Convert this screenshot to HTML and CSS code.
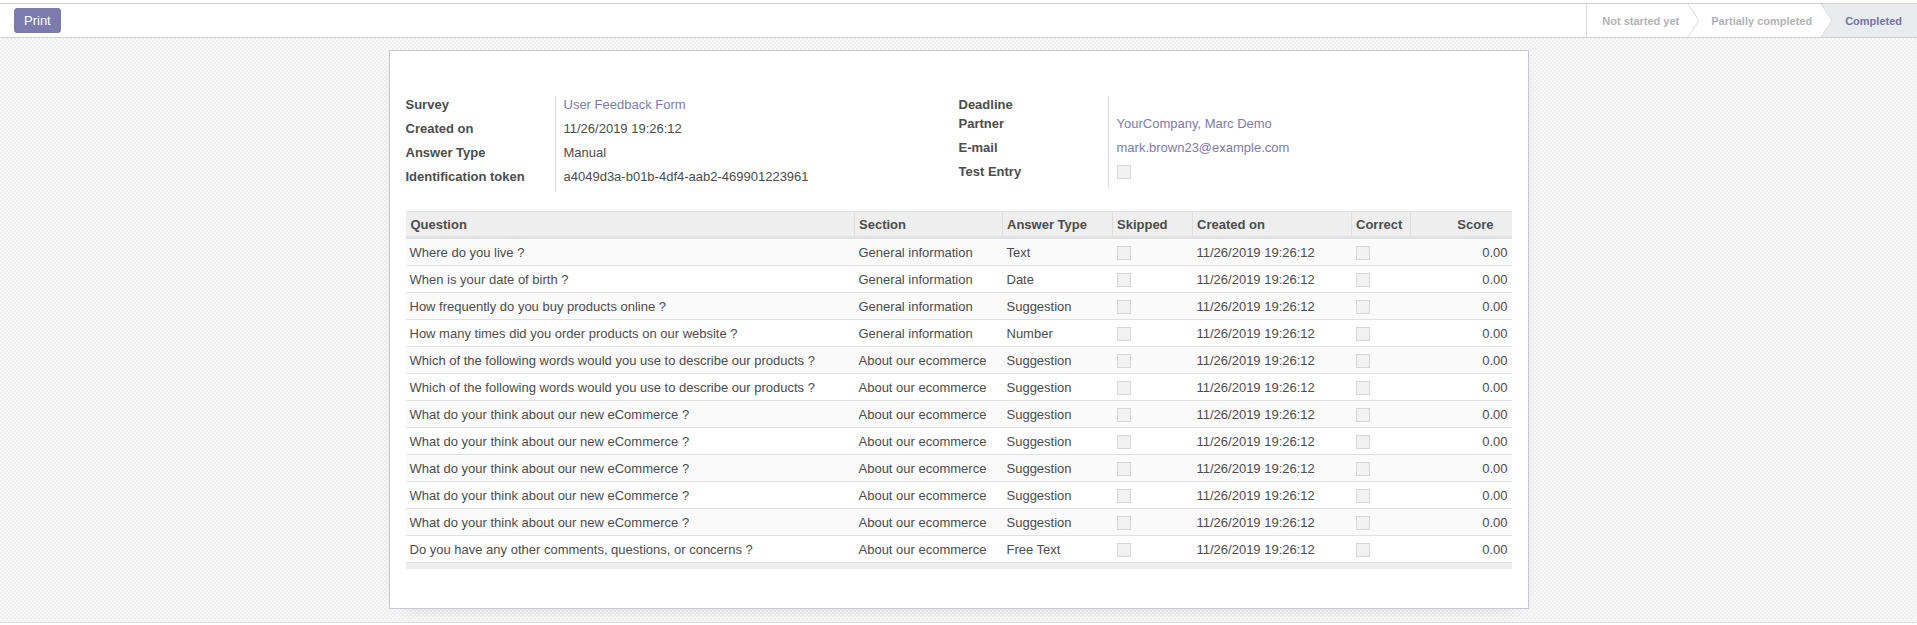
FILE: index.html
```html
<!DOCTYPE html>
<html>
<head>
<meta charset="utf-8">
<link rel="stylesheet" href="styles.css">
</head>
<body>
<div class="topstrip"></div>
<div class="cp">
  <div class="cp-left"><button class="btn-print">Print</button></div>
  <div class="statusbar">
    <span class="st st-first">Not started yet</span>
    <svg class="sep" width="11" height="33" viewBox="0 0 11 33"><polyline points="0,0 11,16.5 0,33" fill="none" stroke="#d9d9d9" stroke-width="1"/></svg>
    <span class="st st-second">Partially completed</span>
    <svg class="sep" width="11" height="33" viewBox="0 0 11 33"><rect x="0" y="0" width="11" height="33" fill="#e9ecef"/><polygon points="0,0 11,16.5 0,33" fill="#ffffff"/><polyline points="0,0 11,16.5 0,33" fill="none" stroke="#d9d9d9" stroke-width="1"/></svg>
    <span class="st st-active">Completed</span>
  </div>
</div>
<div class="sheet-bg">
  <div class="sheet">
    <div class="groups">
      <div class="group">
        <div class="lbl">Survey</div><div class="val"><a class="link">User Feedback Form</a></div>
        <div class="lbl">Created on</div><div class="val">11/26/2019 19:26:12</div>
        <div class="lbl">Answer Type</div><div class="val">Manual</div>
        <div class="lbl">Identification token</div><div class="val">a4049d3a-b01b-4df4-aab2-469901223961</div>
      </div>
      <div class="group group-right">
        <div class="lbl">Deadline</div><div class="val"></div>
        <div class="lbl">Partner</div><div class="val"><a class="link">YourCompany, Marc Demo</a></div>
        <div class="lbl">E-mail</div><div class="val"><a class="link">mark.brown23@example.com</a></div>
        <div class="lbl">Test Entry</div><div class="val"><span class="cb cb-form"></span></div>
      </div>
    </div>
    <table class="lines">
      <colgroup>
        <col class="c-q"><col class="c-s"><col class="c-a"><col class="c-k"><col class="c-d"><col class="c-c"><col class="c-n">
      </colgroup>
      <thead>
        <tr><th>Question</th><th>Section</th><th>Answer Type</th><th>Skipped</th><th>Created on</th><th>Correct</th><th class="num">Score</th></tr>
      </thead>
      <tbody>
        <tr><td>Where do you live ?</td><td>General information</td><td>Text</td><td><span class="cb"></span></td><td>11/26/2019 19:26:12</td><td><span class="cb"></span></td><td class="num">0.00</td></tr>
        <tr><td>When is your date of birth ?</td><td>General information</td><td>Date</td><td><span class="cb"></span></td><td>11/26/2019 19:26:12</td><td><span class="cb"></span></td><td class="num">0.00</td></tr>
        <tr><td>How frequently do you buy products online ?</td><td>General information</td><td>Suggestion</td><td><span class="cb"></span></td><td>11/26/2019 19:26:12</td><td><span class="cb"></span></td><td class="num">0.00</td></tr>
        <tr><td>How many times did you order products on our website ?</td><td>General information</td><td>Number</td><td><span class="cb"></span></td><td>11/26/2019 19:26:12</td><td><span class="cb"></span></td><td class="num">0.00</td></tr>
        <tr><td>Which of the following words would you use to describe our products ?</td><td>About our ecommerce</td><td>Suggestion</td><td><span class="cb"></span></td><td>11/26/2019 19:26:12</td><td><span class="cb"></span></td><td class="num">0.00</td></tr>
        <tr><td>Which of the following words would you use to describe our products ?</td><td>About our ecommerce</td><td>Suggestion</td><td><span class="cb"></span></td><td>11/26/2019 19:26:12</td><td><span class="cb"></span></td><td class="num">0.00</td></tr>
        <tr><td>What do your think about our new eCommerce ?</td><td>About our ecommerce</td><td>Suggestion</td><td><span class="cb"></span></td><td>11/26/2019 19:26:12</td><td><span class="cb"></span></td><td class="num">0.00</td></tr>
        <tr><td>What do your think about our new eCommerce ?</td><td>About our ecommerce</td><td>Suggestion</td><td><span class="cb"></span></td><td>11/26/2019 19:26:12</td><td><span class="cb"></span></td><td class="num">0.00</td></tr>
        <tr><td>What do your think about our new eCommerce ?</td><td>About our ecommerce</td><td>Suggestion</td><td><span class="cb"></span></td><td>11/26/2019 19:26:12</td><td><span class="cb"></span></td><td class="num">0.00</td></tr>
        <tr><td>What do your think about our new eCommerce ?</td><td>About our ecommerce</td><td>Suggestion</td><td><span class="cb"></span></td><td>11/26/2019 19:26:12</td><td><span class="cb"></span></td><td class="num">0.00</td></tr>
        <tr><td>What do your think about our new eCommerce ?</td><td>About our ecommerce</td><td>Suggestion</td><td><span class="cb"></span></td><td>11/26/2019 19:26:12</td><td><span class="cb"></span></td><td class="num">0.00</td></tr>
        <tr><td>Do you have any other comments, questions, or concerns ?</td><td>About our ecommerce</td><td>Free Text</td><td><span class="cb"></span></td><td>11/26/2019 19:26:12</td><td><span class="cb"></span></td><td class="num">0.00</td></tr>
      </tbody>
      <tfoot>
        <tr><td colspan="7" class="foot"></td></tr>
      </tfoot>
    </table>
  </div>
</div>
</body>
</html>
```
FILE: styles.css
```css
html, body {
  margin: 0;
  padding: 0;
  background: #ffffff;
}
body {
  font-family: "Liberation Sans", Arial, sans-serif;
  font-size: 13px;
  color: #4c4c4c;
}
.topstrip {
  height: 3px;
  background: #ffffff;
}
.cp {
  display: flex;
  justify-content: space-between;
  height: 33px;
  border-top: 1px solid #d0d0d0;
  border-bottom: 1px solid #d0d0d0;
  background: #ffffff;
}
.cp-left {
  padding: 4px 0 0 14px;
}
.btn-print {
  font-family: "Liberation Sans", Arial, sans-serif;
  font-size: 13px;
  line-height: 15px;
  color: #ffffff;
  background: #7c7bad;
  border: 1px solid #7c7bad;
  border-radius: 3px;
  padding: 4px 9px;
  margin: 0;
  cursor: pointer;
}
.statusbar {
  display: flex;
  align-items: stretch;
  border-left: 1px solid #dcdcdc;
  height: 33px;
}
.st {
  display: flex;
  align-items: center;
  font-size: 11px;
  font-weight: bold;
  color: #b0b3b8;
  white-space: nowrap;
}
.st-first {
  padding: 0 9px 0 15px;
}
.st-second {
  padding: 0 9px 0 12px;
}
.st-active {
  padding: 0 15px 0 13px;
  background: #e9ecef;
  color: #7473a6;
}
.sep {
  display: block;
  flex: none;
}
.sheet-bg {
  padding: 12px 0 13px;
  background-color: #f4f4f4;
  background-image: repeating-conic-gradient(#efefef 0 25%, #f9f9f9 0 50%);
  background-size: 4px 4px;
  border-bottom: 1px solid #dcdcdc;
}
.sheet {
  width: 1106px;
  margin: 0 auto;
  background: #ffffff;
  border: 1px solid #c8c8d3;
  box-shadow: 0 5px 20px -15px rgba(0, 0, 0, 0.4);
  padding: 45px 16px 39px;
}
.groups {
  display: flex;
  align-items: flex-start;
  margin-bottom: 19px;
}
.group {
  flex: 1;
  display: grid;
  grid-template-columns: 150px 1fr;
  grid-auto-rows: 24px;
}
.group-right {
  grid-template-rows: 19px 24px 24px 24px;
}
.lbl {
  font-weight: bold;
  line-height: 18px;
  border-right: 1px solid #dddddd;
}
.val {
  line-height: 18px;
  padding-left: 8px;
}
.link {
  color: #7c7bad;
  text-decoration: none;
}
.cb {
  display: inline-block;
  width: 12px;
  height: 12px;
  background: #f2f2f2;
  border: 1px solid #d6d6d6;
  vertical-align: middle;
  box-sizing: content-box;
}
.cb-form {
  margin-top: 2px;
  vertical-align: top;
}
.lines {
  width: 1106px;
  border-collapse: collapse;
  table-layout: fixed;
  font-size: 13px;
  color: #4c4c4c;
}
.c-q { width: 449px; }
.c-s { width: 148px; }
.c-a { width: 110px; }
.c-k { width: 80px; }
.c-d { width: 159px; }
.c-c { width: 59px; }
.c-n { width: 101px; }
.lines th {
  height: 24px;
  padding: 0 4px 0 4px;
  text-align: left;
  font-weight: bold;
  background: #eeeeee;
  border-top: 1px solid #dee2e6;
  border-bottom: 3px solid #dee2e6;
  border-left: 1px solid #dddddd;
  white-space: nowrap;
}
.lines th:first-child {
  border-left: none;
  padding-left: 5px;
}
.lines th.num {
  text-align: right;
  padding-right: 18px;
}
.lines td {
  height: 26px;
  padding: 0 4px 0 4px;
  border-top: 1px solid #dee2e6;
  white-space: nowrap;
  overflow: hidden;
}
.lines td.num {
  text-align: right;
}
.lines tbody tr:nth-child(odd) td {
  background: #fafafa;
}
.lines td.foot {
  height: 6px;
  padding: 0;
  background: #eeeeee;
}
```
